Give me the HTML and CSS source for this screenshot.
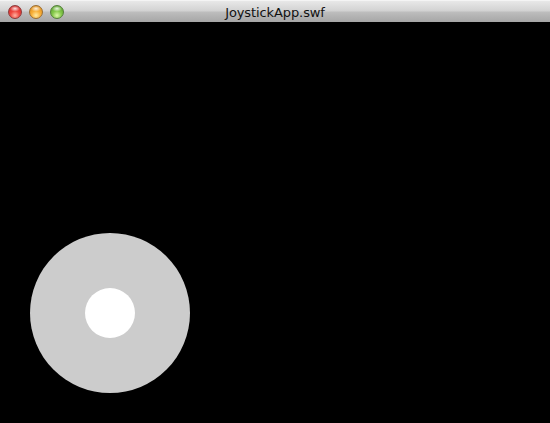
FILE: index.html
```html
<!DOCTYPE html>
<html>
<head>
<meta charset="utf-8">
<link rel="stylesheet" href="styles.css">
</head>
<body>
<div class="window">
  <div class="titlebar">
    <div class="lights">
      <span class="light red"></span>
      <span class="light orange"></span>
      <span class="light green"></span>
    </div>
    <div class="title">JoystickApp.swf</div>
  </div>
  <div class="stage">
    <div class="joystick">
      <div class="knob"></div>
    </div>
  </div>
</div>
</body>
</html>
```
FILE: styles.css
```css
html, body {
  margin: 0;
  padding: 0;
  background: #000;
}
.window {
  width: 550px;
  height: 423px;
  display: flex;
  flex-direction: column;
  overflow: hidden;
}
.titlebar {
  position: relative;
  height: 21px;
  flex: none;
  background: linear-gradient(#e8e8e8 0%, #d3d3d3 45%, #bcbcbc 55%, #a6a6a6 100%);
  border-top: 1px solid #f4f4f4;
  display: flex;
  align-items: center;
  justify-content: center;
}
.lights {
  position: absolute;
  left: 8px;
  top: 4px;
  display: flex;
  gap: 7px;
}
.light {
  width: 14px;
  height: 14px;
  border-radius: 50%;
  box-sizing: border-box;
  display: block;
}
.red {
  background:
    radial-gradient(ellipse 5px 3px at 50% 22%, rgba(255,255,255,0.85), rgba(255,255,255,0) 100%),
    radial-gradient(circle at 50% 78%, #ffb0a0 0%, #f0483f 40%, #c61d20 100%);
  border: 1px solid #8d3a3a;
}
.orange {
  background:
    radial-gradient(ellipse 5px 3px at 50% 22%, rgba(255,255,255,0.85), rgba(255,255,255,0) 100%),
    radial-gradient(circle at 50% 78%, #ffeaa0 0%, #f8b03a 40%, #d4800e 100%);
  border: 1px solid #9a6e32;
}
.green {
  background:
    radial-gradient(ellipse 5px 3px at 50% 22%, rgba(255,255,255,0.85), rgba(255,255,255,0) 100%),
    radial-gradient(circle at 50% 78%, #dcf8a8 0%, #86c94c 40%, #4a9524 100%);
  border: 1px solid #55803a;
}
.title {
  font-family: "DejaVu Sans", "Liberation Sans", sans-serif;
  font-size: 13px;
  color: #111;
  margin-top: 1px;
  letter-spacing: -0.1px;
}
.stage {
  flex: 1;
  background: #000;
  padding: 211px 0 0 30px;
}
.joystick {
  width: 160px;
  height: 160px;
  border-radius: 50%;
  background: #cccccc;
  display: flex;
  align-items: center;
  justify-content: center;
}
.knob {
  width: 50px;
  height: 50px;
  border-radius: 50%;
  background: #ffffff;
}
```
